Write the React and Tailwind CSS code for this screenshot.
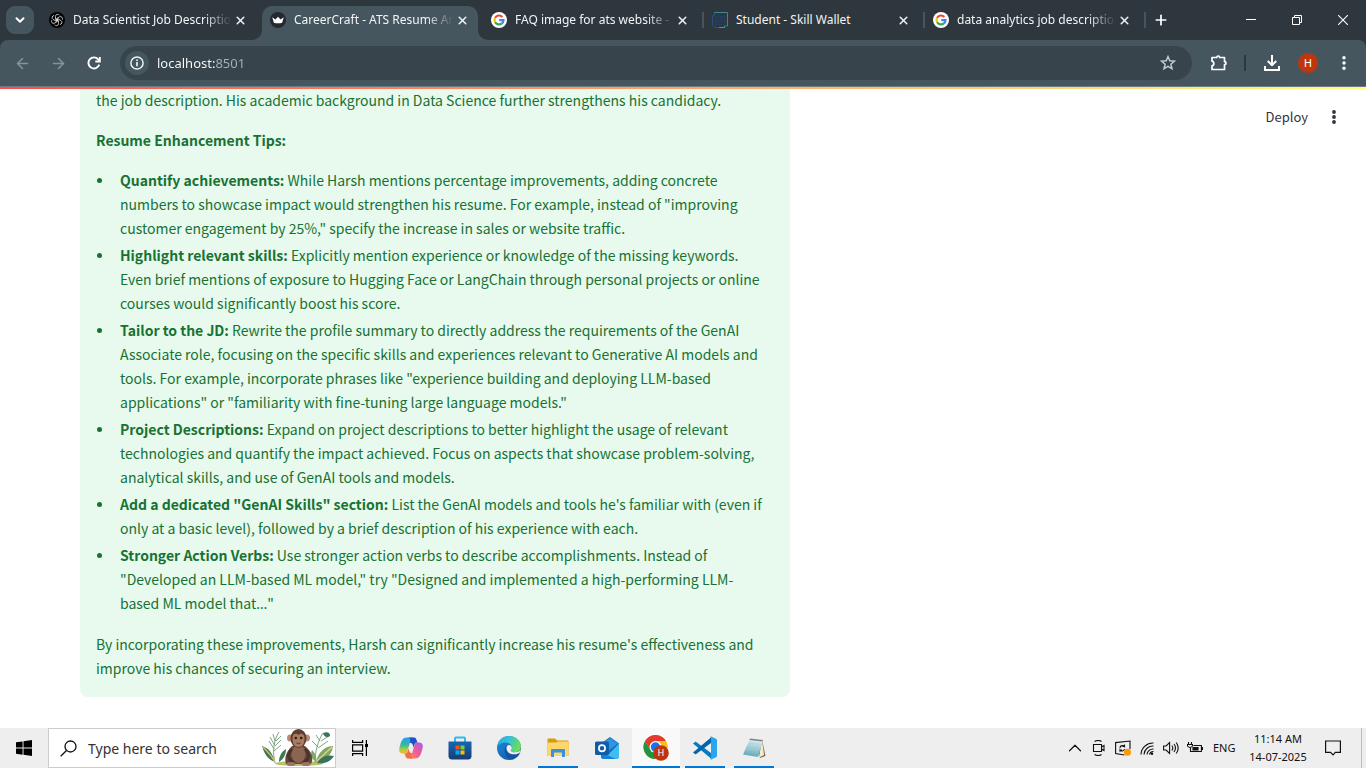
import React from "react";
import { ArrowLeft, ArrowRight, Plus, X, ChevronDown, ChevronUp } from "lucide-react";

const tips = [
  {
    title: "Quantify achievements:",
    lines: [
      "While Harsh mentions percentage improvements, adding concrete",
      "numbers to showcase impact would strengthen his resume. For example, instead of \"improving",
      "customer engagement by 25%,\" specify the increase in sales or website traffic.",
    ],
  },
  {
    title: "Highlight relevant skills:",
    lines: [
      "Explicitly mention experience or knowledge of the missing keywords.",
      "Even brief mentions of exposure to Hugging Face or LangChain through personal projects or online",
      "courses would significantly boost his score.",
    ],
  },
  {
    title: "Tailor to the JD:",
    lines: [
      "Rewrite the profile summary to directly address the requirements of the GenAI",
      "Associate role, focusing on the specific skills and experiences relevant to Generative AI models and",
      "tools. For example, incorporate phrases like \"experience building and deploying LLM-based",
      "applications\" or \"familiarity with fine-tuning large language models.\"",
    ],
  },
  {
    title: "Project Descriptions:",
    lines: [
      "Expand on project descriptions to better highlight the usage of relevant",
      "technologies and quantify the impact achieved. Focus on aspects that showcase problem-solving,",
      "analytical skills, and use of GenAI tools and models.",
    ],
  },
  {
    title: "Add a dedicated \"GenAI Skills\" section:",
    lines: [
      "List the GenAI models and tools he's familiar with (even if",
      "only at a basic level), followed by a brief description of his experience with each.",
    ],
  },
  {
    title: "Stronger Action Verbs:",
    lines: [
      "Use stronger action verbs to describe accomplishments. Instead of",
      "\"Developed an LLM-based ML model,\" try \"Designed and implemented a high-performing LLM-",
      <>based ML model that<span className="font-['Noto_Sans',sans-serif]">…</span>"</>,
    ],
  },
];

function Lines({ lines }) {
  return lines.map((line, i) => (
    <React.Fragment key={i}>
      {i > 0 && <br />}
      {line}
    </React.Fragment>
  ));
}

function OpenAiIcon() {
  return (
    <svg viewBox="0 0 16 16" className="size-4">
      <circle cx="8" cy="8" r="8" fill="#000" />
      <g fill="none" stroke="#d9d9d9" strokeWidth="0.8">
        {[0, 60, 120, 180, 240, 300].map((a) => (
          <path key={a} transform={`rotate(${a} 8 8)`} d="M6.500 7.100V4.300a2.100 2.100 0 0 1 3.900-1M6.500 7.100l3.300 1.900" />
        ))}
      </g>
    </svg>
  );
}

function CrownIcon() {
  return (
    <svg viewBox="0 0 16 16" className="size-4">
      <circle cx="8" cy="8" r="8" fill="#262730" />
      <path d="M2.200 5.300 5.400 7.600 8 4.800l2.600 2.800 3.200-2.300-1.700 5.400c-2.600.7-5.600.7-8.200 0z" fill="#fff" />
    </svg>
  );
}

function GoogleIcon() {
  return (
    <svg viewBox="0 0 16 16" className="size-4">
      <circle cx="8" cy="8" r="8" fill="#fff" />
      <g fill="none" strokeWidth="2.200">
        <path d="M11.300 4.900A4.500 4.500 0 0 0 4.100 5.800" stroke="#ea4335" />
        <path d="M4.100 5.800a4.500 4.500 0 0 0 0 4.400" stroke="#fbbc05" />
        <path d="M4.100 10.200a4.500 4.500 0 0 0 6.800 1.200" stroke="#34a853" />
        <path d="M10.900 11.400A4.500 4.500 0 0 0 12.500 8.100H8.200" stroke="#4285f4" />
      </g>
    </svg>
  );
}

function WalletIcon() {
  return (
    <svg viewBox="0 0 16 16" className="size-4" fill="none">
      <path d="M2.500 1.500V.5h13v13.500h-2" stroke="#3b8795" />
      <path d="M2.500 1.500v2h-2v10l2 2h9l2-1.500" stroke="#2b4f86" />
      <path d="M3.500 4.500h9v8h-9z" stroke="#25406e" strokeDasharray="3 1" />
      <path d="M4 8h3v2H5v3M7 6h4M9 8v3" stroke="#233e6d" />
      <path d="M7 15.500h5.500V14" stroke="#35a0a6" />
    </svg>
  );
}

const tabs = [
  { title: "Data Scientist Job Descriptio", Icon: OpenAiIcon, fade: true },
  { title: "CareerCraft - ATS Resume Ar", Icon: CrownIcon, fade: true, active: true },
  { title: "FAQ image for ats website -", Icon: GoogleIcon, fade: true, divider: true },
  { title: "Student - Skill Wallet", Icon: WalletIcon, divider: true },
  { title: "data analytics job description", Icon: GoogleIcon, fade: true, divider: true },
];

function Tab({ title, Icon, active, divider, fade }) {
  return (
    <div
      className={
        "relative mt-[6px] flex h-[34px] min-w-0 items-center pb-[6px] " +
        (active ? "mr-[5px] flex-[0_1_216px] rounded-t-[10px] bg-[#45565f]" : "flex-[0_1_221px]")
      }
    >
      {active && (
        <>
          <svg viewBox="0 0 10 10" className="absolute bottom-0 -left-[10px] size-[10px]" fill="#45565f"><path d="M10 0v10H0A10 10 0 0 0 10 0" /></svg>
          <svg viewBox="0 0 10 10" className="absolute -right-[10px] bottom-0 size-[10px]" fill="#45565f"><path d="M0 0v10h10A10 10 0 0 1 0 0" /></svg>
        </>
      )}
      <button className="flex min-w-0 grow items-center gap-2 pl-2 text-left">
        <span className="shrink-0"><Icon /></span>
        <span
          className={
            "min-w-0 grow text-[12px] leading-4 whitespace-nowrap text-[#f2f4f5] " +
            (fade ? "[mask-image:linear-gradient(to_right,#000_calc(100%-28px),transparent)]" : "")
          }
        >
          {title}
        </span>
      </button>
      <button aria-label="Close tab" className={"grid size-4 shrink-0 place-items-center text-[#eceff0] " + (active ? "mr-2" : divider ? "mr-3" : "mr-[14px]")}>
        <X size={13} strokeWidth={3} />
      </button>
      {divider && <span className="h-4 w-[2px] shrink-0 bg-[#45565f]" />}
    </div>
  );
}

function Browser() {
  return (
    <header className="bg-[#2d373d] font-['Noto_Sans',sans-serif]">
      <div className="flex h-10">
        <button aria-label="Search tabs" className="mt-[6px] mr-[7px] ml-[6px] grid size-7 shrink-0 place-items-center rounded-[9px] bg-[#45565f] text-white">
          <ChevronDown size={14} strokeWidth={3.4} />
        </button>
        <div className="flex min-w-0 grow">
          {tabs.map((t) => <Tab key={t.title} {...t} />)}
          <button aria-label="New tab" className="grid h-10 w-[30px] shrink-0 place-items-center text-white"><Plus size={16} strokeWidth={2.6} /></button>
        </div>
        <div className="flex shrink-0 text-white">
          <button aria-label="Minimize" className="grid h-10 w-[46px] place-items-center">
            <svg viewBox="0 0 10 10" className="size-[10px]" stroke="currentColor"><path d="M0 4.500h10" /></svg>
          </button>
          <button aria-label="Restore" className="grid h-10 w-[46px] place-items-center">
            <svg viewBox="0 0 10 10" className="size-[10px]" stroke="currentColor" fill="none"><path d="M.5 2.500h7v7h-7zM2.500 2.500v-2h7v7h-2" /></svg>
          </button>
          <button aria-label="Close" className="grid h-10 w-[46px] place-items-center">
            <svg viewBox="0 0 10 10" className="size-[10px]" stroke="currentColor" strokeWidth="1.100"><path d="m0 0 10 10M10 0 0 10" /></svg>
          </button>
        </div>
      </div>
      <div className="flex h-[47px] items-center rounded-t-[8px] border-b border-[#6c7a81] bg-[#45565f]">
        <button aria-label="Back" className="grid w-11 place-items-center text-[#87939a]"><ArrowLeft size={17} strokeWidth={2.2} /></button>
        <button aria-label="Forward" className="grid w-7 place-items-center text-[#87939a]"><ArrowRight size={17} strokeWidth={2.2} /></button>
        <button aria-label="Reload" className="grid w-11 place-items-center text-white">
          <svg viewBox="0 0 14 14" className="size-[14px]" fill="none" stroke="currentColor" strokeWidth="1.900"><path d="M12.200 8.600A5.500 5.500 0 1 1 11.200 3.400L12.600 5" /><path d="M12.800 1v4.500H8.300" /></svg>
        </button>
        <div className="ml-1 flex h-[34px] min-w-0 grow items-center rounded-full bg-[#38444b] pr-4 pl-[5px]">
          <button aria-label="Site information" className="grid size-6 shrink-0 place-items-center rounded-full bg-[#45565f]">
            <svg viewBox="0 0 14 14" className="size-[14px]" fill="none" stroke="#eceff0" strokeWidth="1.500"><circle cx="7" cy="7" r="6.100" /><path d="M7 6v4.300M7 3.500v1.500" strokeWidth="1.700" /></svg>
          </button>
          <input
            aria-label="Address"
            defaultValue="localhost:8501"
            className="ml-2 min-w-0 grow bg-[linear-gradient(to_right,#fff_58px,#a9b2b6_58px)] bg-clip-text text-[13px] leading-5 text-transparent outline-none"
          />
          <button aria-label="Bookmark" className="text-[#c3c8cb]">
            <svg viewBox="0 0 16 16" className="size-4" fill="none" stroke="currentColor" strokeWidth="1.500"><path d="m8 1.600 1.800 4.200 4.600.4-3.500 3 1.100 4.500L8 11.300l-4 2.400 1.100-4.500-3.500-3 4.600-.4z" /></svg>
          </button>
        </div>
        <div className="flex shrink-0 items-center text-white">
          <button aria-label="Extensions" className="ml-[18px]">
            <svg viewBox="0 0 18 18" className="size-[18px]" fill="none" stroke="currentColor" strokeWidth="1.700"><path d="M2 3.500h4.800c0-2 2.900-2 2.900 0H14.500v4.200c2 0 2 3 0 3V15.500H2v-3.700c2.400 0 2.400-4.600 0-4.600z" strokeLinejoin="round" /></svg>
          </button>
          <span className="mr-[17px] ml-4 h-4 w-[2px] bg-[#2d373d]" />
          <button aria-label="Downloads">
            <svg viewBox="0 0 18 18" className="size-[18px]" fill="none" stroke="currentColor" strokeWidth="2"><path d="M9 1v9.500M4.700 7 9 11.200 13.300 7M2 12v4h14v-4" /></svg>
          </button>
          <button aria-label="Profile" className="ml-[17px] grid size-5 place-items-center rounded-full bg-[#bf360c] font-['Roboto',sans-serif] text-[11px] leading-none">H</button>
          <button aria-label="Menu" className="mr-[14px] ml-[18px]">
            <svg viewBox="0 0 16 16" className="size-4" fill="currentColor"><circle cx="8" cy="2.700" r="1.700" /><circle cx="8" cy="8" r="1.700" /><circle cx="8" cy="13.300" r="1.700" /></svg>
          </button>
        </div>
      </div>
    </header>
  );
}

function Page() {
  return (
    <main className="grow bg-white font-['Noto_Sans_CJK_SC',sans-serif]">
      <div className="h-[2px] bg-[linear-gradient(90deg,#ff4b4b,#fffd80)]" />
      <div className="flex items-start justify-between">
        <article className="ml-20 flex w-[710px] flex-col gap-4 rounded-b-lg bg-[#e8f9ee] px-4 pb-[17px] text-[14px] leading-6 text-[#177233]">
          <p className="-mt-px whitespace-nowrap">the job description. His academic background in Data Science further strengthens his candidacy.</p>
          <h2 className="font-bold">Resume Enhancement Tips:</h2>
          <ul className="flex flex-col gap-[3px]">
            {tips.map((t) => (
              <li key={t.title} className="flex gap-[18px] whitespace-nowrap before:mt-[10px] before:ml-px before:size-[5px] before:shrink-0 before:rounded-full before:bg-[#177233] before:content-['']">
                <p><strong className="font-bold">{t.title}</strong> <Lines lines={t.lines} /></p>
              </li>
            ))}
          </ul>
          <p className="whitespace-nowrap">
            <Lines lines={["By incorporating these improvements, Harsh can significantly increase his resume's effectiveness and", "improve his chances of securing an interview."]} />
          </p>
        </article>
        <div className="mt-4 mr-6 flex items-center gap-[18px] text-[#31333f]">
          <button className="text-[13px] leading-6">Deploy</button>
          <button aria-label="App menu">
            <svg viewBox="0 0 16 16" className="size-4" fill="currentColor"><circle cx="8" cy="3" r="1.900" /><circle cx="8" cy="8" r="1.900" /><circle cx="8" cy="13" r="1.900" /></svg>
          </button>
        </div>
      </div>
    </main>
  );
}

function Monkey() {
  return (
    <svg viewBox="0 0 74 38" className="h-[38px] w-[74px] shrink-0" aria-hidden="true">
      <ellipse cx="38" cy="34.500" rx="24" ry="2.500" fill="#b9c069" />
      <g fill="none" stroke="#7fa684" strokeWidth="1">
        <path d="M14 34C11 22 13 11 18 3M13 20 8 12M13.500 16 9 8M14 12l-2-7M13 22l7-6M14 17l6-6M15 12l5-5" />
        <path d="M54 34c0-12 3-22 8-30M57 18l-6-6M59 12l-4-6M57 19l10-7M60 12l8-5" />
      </g>
      <path d="M1 17c7 2 11 8 13 16C6 30 3 24 1 17M25 20c-5 3-7 8-7 13 5-3 7-8 7-13" fill="#3f7757" />
      <path d="M2 18c5 5 9 9 12 15" stroke="#cfc067" fill="none" strokeWidth="1.500" />
      <path d="M72 17c-9 0-15 7-17 16 9-1 16-7 17-16M51 21c4 4 5 8 4 12-4-3-6-8-4-12" fill="#7fa866" />
      <path d="M71 18 56 32" stroke="#e0d080" fill="none" strokeWidth="1.500" />
      <path d="M73 27c-8-2-14 2-17 7 8 1 13-1 17-7M62 4c5-2 7 0 7 3-3 2-6 1-7-3" fill="#39735a" />
      <path d="M31 17c-6 6-8 12-6 18h25c3-6 1-12-6-18" fill="#65483b" />
      <ellipse cx="37.500" cy="25" rx="7" ry="9" fill="#8a6552" />
      <ellipse cx="29" cy="9" rx="3" ry="3.500" fill="#b98b70" /><ellipse cx="46" cy="9" rx="3" ry="3.500" fill="#b98b70" />
      <ellipse cx="37.500" cy="9.500" rx="8" ry="9.500" fill="#5c3d32" />
      <path d="M31.500 9c0-5 4-5 6-3 2-2 6-2 6 3 0 6-2 9-6 9s-6-3-6-9" fill="#a97b63" />
      <circle cx="34.800" cy="9" r="1.300" fill="#2c1c18" /><circle cx="40.200" cy="9" r="1.300" fill="#2c1c18" />
      <path d="M35.500 14q2 1.500 4 0" stroke="#5b382c" fill="none" />
      <path d="M30 21c-4 5-3 9 2 12M45 21c4 5 3 9-2 12" stroke="#4b332b" strokeWidth="3" fill="none" strokeLinecap="round" />
      <ellipse cx="30" cy="35" rx="4.500" ry="2" fill="#9f7560" /><ellipse cx="45" cy="35" rx="4.500" ry="2" fill="#9f7560" />
    </svg>
  );
}

function CopilotIcon() {
  return (
    <svg viewBox="0 0 24 24" className="size-6">
      <defs>
        <linearGradient id="cpA" x1="0" y1="0" x2="0" y2="1"><stop stopColor="#2a9df4" /><stop offset=".45" stopColor="#35b6a6" /><stop offset=".75" stopColor="#a9cf3c" /><stop offset="1" stopColor="#ffb52e" /></linearGradient>
        <linearGradient id="cpB" x1="1" y1="0" x2="0" y2="1"><stop stopColor="#a65de8" /><stop offset=".5" stopColor="#ee5b9c" /><stop offset="1" stopColor="#ff9147" /></linearGradient>
      </defs>
      <path d="M17.500 6.500h2.200c4.800 0 4.600 3.500 3.400 7.500-1.600 5.600-3 8.500-6.600 8.500H9c2 0 2.800-1 3.400-3l3-10c.5-1.800 1-3 2.100-3" fill="url(#cpB)" />
      <path d="M6.500 17.500H4.300C-.5 17.500-.3 14 .9 10 2.500 4.400 3.900 1.500 7.500 1.500H15c-2 0-2.800 1-3.400 3l-3 10c-.5 1.800-1 3-2.100 3" fill="url(#cpA)" />
      <path d="M8 1.500h7c2 0 2.200 1.500 2.800 3.200.3 1 .8 1.800 1.900 1.800h-2.200c-1.200 0-1.700.8-2.100 2.300l-.9 3c-.4-3.300-1.500-5-3.700-5 .7-3 1-5.300-2.800-5.300" fill="#1c50cf" />
      <path d="M16 22.500H9c-2 0-2.200-1.500-2.800-3.200-.3-1-.8-1.800-1.900-1.800h2.200c1.200 0 1.700-.8 2.100-2.300l.9-3c.4 3.300 1.500 5 3.700 5-.7 3-1 5.300 2.800 5.300" fill="#f26b4b" />
    </svg>
  );
}

function StoreIcon() {
  return (
    <svg viewBox="0 0 24 24" className="size-6">
      <defs><linearGradient id="st" x2="0" y2="1"><stop stopColor="#1765b5" /><stop offset="1" stopColor="#183d73" /></linearGradient></defs>
      <path d="M7 6V2.500c0-.6.4-1 1-1h8c.6 0 1 .4 1 1V6" fill="none" stroke="#31b8ee" strokeWidth="2" />
      <path d="M.5 5.500h23V20c0 2-1 3.500-3.500 3.500H4C1.500 23.500.5 22 .5 20z" fill="url(#st)" />
      <path d="M7.500 9.500h4v4h-4z" fill="#f1511b" /><path d="M12.500 9.500h4v4h-4z" fill="#80cc28" />
      <path d="M7.500 14.500h4v4h-4z" fill="#00adef" /><path d="M12.500 14.500h4v4h-4z" fill="#fbbc09" />
    </svg>
  );
}

function EdgeIcon() {
  return (
    <svg viewBox="0 0 24 24" className="size-6">
      <defs>
        <linearGradient id="edA" x2="1" y2=".3"><stop stopColor="#2aa7df" /><stop offset=".5" stopColor="#35c1d7" /><stop offset="1" stopColor="#6cdc5e" /></linearGradient>
        <linearGradient id="edB" x2="1" y2="1"><stop stopColor="#1b8fe0" /><stop offset="1" stopColor="#124f9c" /></linearGradient>
      </defs>
      <circle cx="12" cy="12" r="12" fill="url(#edB)" />
      <path d="M0 11.500C.6 4.800 5.700 0 12 0c7 0 12 5 12 10.500 0 3.600-2.700 5.800-6 5.800-2.800 0-4.200-1-4.200-1.900 0-.7 1-1 1-2.900C14.800 8.600 12 6.500 8.500 6.500 4 6.500 1 8.800 0 11.500" fill="url(#edA)" />
      <path d="M9 10c-3.500 5.500.5 12.300 6 13.600 3-.8 5.800-2.800 7.200-5.300.3-.5-.2-.8-.7-.5-5 2.500-10.300.8-11.700-3-.7-2-.3-3.600.7-4.800z" fill="#15539f" />
      <path d="M13.800 14.400c0-.7 1-1 1-2.900 0-1-1-2.500-2.800-2.500-3.500 0-4 7 2.500 9 3.800 1 7-.2 8.300-1.500.5-.6 1-1.500 1.200-2.700-1.500 1.700-3.500 2.500-6 2.500-2.800 0-4.200-1-4.200-1.900" fill="#eee" />
    </svg>
  );
}

function ExplorerIcon() {
  return (
    <svg viewBox="0 0 24 24" className="size-6">
      <path d="M1.500 3.500c0-.6.4-1 1-1H9l2 2h10.500c.6 0 1 .4 1 1V20h-21z" fill="#d79b12" />
      <path d="M1.500 6.500h9l1.500-1h10.500V19c0 .6-.4 1-1 1h-19c-.6 0-1-.4-1-1z" fill="#ffd768" />
      <path d="M5 20v-6c0-.6.4-1 1-1h12c.6 0 1 .4 1 1v6c0 .6-.4 1-1 1h-2v-3.500c0-.6-.4-1-1-1H9c-.6 0-1 .4-1 1V21H6c-.6 0-1-.4-1-1" fill="#3992de" />
    </svg>
  );
}

function OutlookIcon() {
  return (
    <svg viewBox="0 0 24 24" className="size-6">
      <path d="M6 7.500 15 1l9 6.500V20c0 2-1 3-3 3H9c-2 0-3-1-3-3z" fill="#1666b8" />
      <path d="m8 6.500 7-4.500 8 5.500-9 7H8z" fill="#2b96e2" />
      <path d="M24 7.500V20c0 2-1 3-3 3H9z" fill="#3fbdf1" />
      <path d="M6 16.500 21 23H9c-2 0-3-1-3-3z" fill="#1283d9" />
      <rect y="5.500" width="14" height="13.500" rx="1.500" fill="#0f5da8" />
      <circle cx="7" cy="12.200" r="3.100" fill="none" stroke="#fff" strokeWidth="1.700" />
    </svg>
  );
}

function ChromeIcon() {
  return (
    <svg viewBox="0 0 26 26" className="size-[26px]">
      <circle cx="12.500" cy="12" r="12" fill="#fbc116" />
      <path d="M2.100 6A12 12 0 0 1 22.900 6H12.500l-5.200 9z" fill="#e33b2e" />
      <path d="M2.100 6A12 12 0 0 0 12.500 24l5.200-9H7.300z" fill="#229342" />
      <path d="M12.500 6h10.400A12 12 0 0 1 12.500 24l5.200-9z" fill="#fbc116" />
      <circle cx="12.500" cy="12" r="6" fill="#fff" /><circle cx="12.500" cy="12" r="4.700" fill="#1a73e8" />
      <circle cx="18" cy="18" r="7.800" fill="#bf360c" />
      <text x="18" y="21.300" textAnchor="middle" fontSize="9" fill="#fff" fontFamily="Roboto, sans-serif">H</text>
    </svg>
  );
}

function CodeIcon() {
  return (
    <svg viewBox="0 0 24 24" className="size-6">
      <path d="M0 7.500 2 6c.4-.3.8-.3 1.200 0L18 17v5.500z" fill="#0879c2" />
      <path d="M0 16.500 2 18c.4.3.8.3 1.200 0L18 7V1.500z" fill="#0065a9" />
      <path d="M17 1.200c.5-.5 1-.8 1.700-.4l4.300 2c.6.3 1 .8 1 1.500v15.400c0 .7-.4 1.200-1 1.500l-4.300 2c-.7.4-1.200.1-1.700-.4.6.2 1-.2 1-.8V2c0-.6-.4-1-1-.8" fill="#2aa6ee" />
    </svg>
  );
}

function NotepadIcon() {
  return (
    <svg viewBox="0 0 24 24" className="size-6">
      <defs><linearGradient id="np" x1=".6" x2=".4" y2="1"><stop stopColor="#e4f3f4" /><stop offset="1" stopColor="#5ba7b7" /></linearGradient></defs>
      <path d="M20 3.500 23.500 20 18 22l-2-4z" fill="#806e4c" />
      <path d="m20 3.500 2 15.500-5 2.500z" fill="#f3ead2" />
      <path d="M8 2.500 21 4l-5 17L1 18.500z" fill="url(#np)" />
      <path d="M8 2.500 21 4l-.5 1.500-13-1.600z" fill="#7b8588" />
      <path d="m6.500 7 12 1.400M5.500 10l12 1.400M4.500 13l12 1.400" stroke="#a9cdd4" strokeWidth=".5" />
    </svg>
  );
}

const apps = [
  { name: "Copilot", Icon: CopilotIcon },
  { name: "Microsoft Store", Icon: StoreIcon },
  { name: "Edge", Icon: EdgeIcon },
  { name: "File Explorer", Icon: ExplorerIcon, open: true },
  { name: "Outlook", Icon: OutlookIcon },
  { name: "Chrome", Icon: ChromeIcon, current: true },
  { name: "Visual Studio Code", Icon: CodeIcon, open: true },
  { name: "Notepad", Icon: NotepadIcon, open: true },
];

function TrayButton({ label, children }) {
  return (
    <button aria-label={label} className="grid h-10 w-6 place-items-center">
      <svg viewBox="0 0 16 16" className="size-4" fill="none" stroke="#111" strokeWidth="1.100">{children}</svg>
    </button>
  );
}

function Taskbar() {
  return (
    <footer className="flex h-10 shrink-0 bg-[#eee] font-['Noto_Sans',sans-serif] text-[#111]">
      <button aria-label="Start" className="grid w-12 shrink-0 place-items-center">
        <svg viewBox="0 0 16 16" className="size-4" fill="#000"><path d="M0 2.300 6.600 1.400v6.200H0zM7.500 1.200 16 0v7.600H7.500zM0 8.500h6.600v6.200L0 13.800zM7.500 8.500H16V16l-8.500-1.200z" /></svg>
      </button>
      <div className="flex w-72 shrink-0 items-center border border-[#ccc] bg-white pl-[11px]">
        <svg viewBox="0 0 17 17" className="size-[17px] shrink-0" fill="none" stroke="#111" strokeWidth="1.300"><circle cx="10.500" cy="6.500" r="5.500" /><path d="M6.500 10.500.7 16.300" /></svg>
        <input aria-label="Search" placeholder="Type here to search" className="ml-[11px] min-w-0 grow text-[14px] outline-none placeholder:text-[#333]" />
        <span className="shrink-0"><Monkey /></span>
      </div>
      <button aria-label="Task View" className="mr-[3px] grid w-12 shrink-0 place-items-center">
        <svg viewBox="0 0 16 16" className="size-4" fill="none" stroke="#000" strokeWidth="1.200"><path d="M.6 0v2.400h10V0M.6 4.900h10v6.200H.6zM.6 16v-2.400h10V16M14.400 0v16" /><path d="M13 4h3v3h-3z" fill="#000" stroke="none" /></svg>
      </button>
      <nav className="flex gap-px">
        {apps.map(({ name, Icon, open, current }) => (
          <button key={name} aria-label={name} className={"flex w-12 flex-col items-center " + (current ? "bg-[#f9f9f9]" : "")}>
            <span className="grid grow place-items-center"><Icon /></span>
            <span className={"-mt-[2px] h-[2px] " + (current ? "w-full bg-[#0078d7]" : open ? "w-10 bg-[#0078d7]" : "w-10")} />
          </button>
        ))}
      </nav>
      <div className="ml-auto flex shrink-0 items-center text-[11px] leading-[18px]">
        <button aria-label="Show hidden icons" className="grid h-10 w-6 place-items-center"><ChevronUp size={22} strokeWidth={1.300} /></button>
        <TrayButton label="Meet now"><path d="M2.500 4.500h8v7h-8zM10.500 7l2.500-1.500v5L10.500 9M3.500 1.500q4-2 7 0M3.500 14.500q4 2 7 0" /></TrayButton>
        <TrayButton label="Windows Update">
          <path d="M9.500 15 .6 13.500V2.600L15 1v8" /><path d="M5 8a2.500 2.500 0 0 1 4.500-1.500V4.500M9.500 6.500h-2M9.500 9A2.500 2.500 0 0 1 5 10v1.800M5 10h2" /><circle cx="12.500" cy="12.300" r="3.500" fill="#ff9800" stroke="none" />
        </TrayButton>
        <TrayButton label="Network">
          <path d="M2 14.500A12 12 0 0 1 14.500 3M5 14.500A9 9 0 0 1 14.500 6M8 14.500A6 6 0 0 1 14.500 9M10.500 14.500A4 4 0 0 1 14.500 11.500" /><circle cx="13" cy="13.800" r="1.200" fill="#111" stroke="none" />
        </TrayButton>
        <TrayButton label="Volume"><path d="M.6 6h2.500l3.500-3.500v11L3.100 10H.6zM8.800 5.500q2 2.500 0 5M11 4q3 4 0 8M13.200 2.500q4 5.500 0 11" /></TrayButton>
        <TrayButton label="Battery"><path d="M6.500 5.500h7.900v6H3.500V8M14.500 7.500h1v2h-1M1.500 2v2.500M4.500 2v2.500M.5 4.500h5v1.500q-2.500 3-5 0z" /><path d="M6 7.500h5v2.500H6z" fill="#111" /></TrayButton>
        <button className="ml-[6px] w-[25px] text-left">ENG</button>
        <time className="ml-[9px] w-[62px] text-center"><span className="block">11:14 AM</span><span className="block">14-07-2025</span></time>
        <button aria-label="Notifications" className="mr-[18px] ml-[14px] grid h-10 w-5 place-items-center">
          <svg viewBox="0 0 16 16" className="size-4" fill="none" stroke="#111" strokeWidth="1.200"><path d="M.6 1h14.800v11.400h-5L8 14.800l-2.400-2.400h-5z" /></svg>
        </button>
        <span className="mr-1 h-10 w-px bg-[#bbb]" />
      </div>
    </footer>
  );
}

export default function App() {
  return (
    <div className="flex min-h-screen flex-col bg-white">
      <Browser />
      <Page />
      <Taskbar />
    </div>
  );
}
